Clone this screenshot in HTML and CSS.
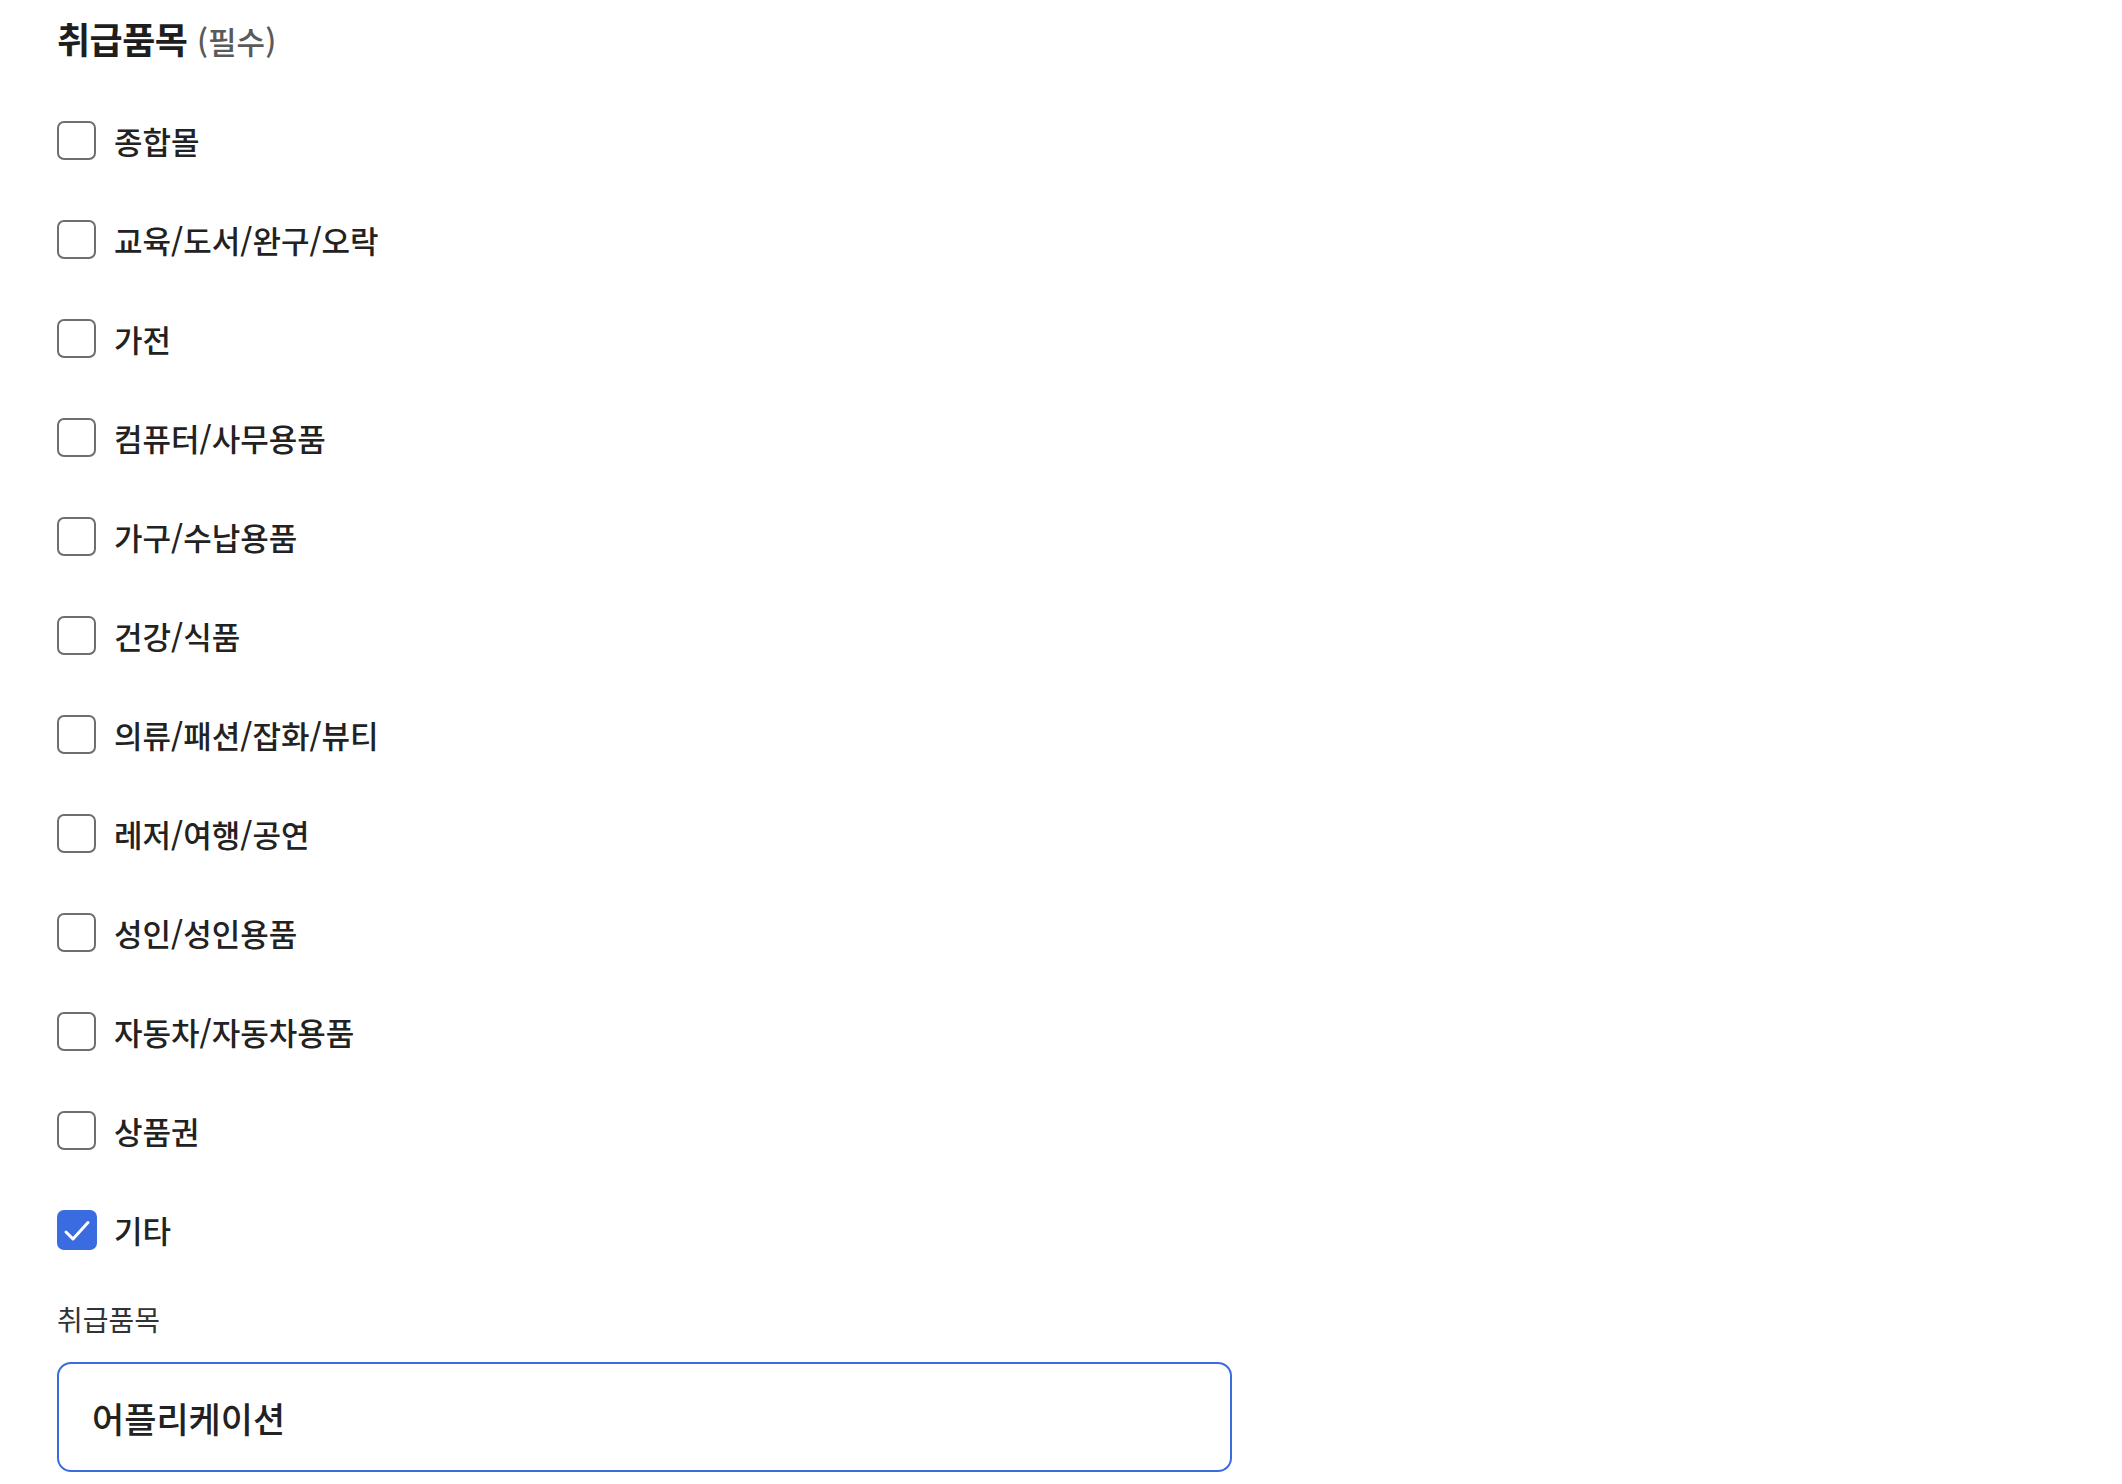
FILE: index.html
```html
<!DOCTYPE html>
<html lang="ko">
<head>
<meta charset="utf-8">
<link rel="stylesheet" href="styles.css">
</head>
<body>
<div class="page">
  <h2 class="title">취급품목 <span class="req">(필수)</span></h2>
  <ul class="list">
    <li class="row"><span class="box"></span><span class="lbl">종합몰</span></li>
    <li class="row"><span class="box"></span><span class="lbl">교육/도서/완구/오락</span></li>
    <li class="row"><span class="box"></span><span class="lbl">가전</span></li>
    <li class="row"><span class="box"></span><span class="lbl">컴퓨터/사무용품</span></li>
    <li class="row"><span class="box"></span><span class="lbl">가구/수납용품</span></li>
    <li class="row"><span class="box"></span><span class="lbl">건강/식품</span></li>
    <li class="row"><span class="box"></span><span class="lbl">의류/패션/잡화/뷰티</span></li>
    <li class="row"><span class="box"></span><span class="lbl">레저/여행/공연</span></li>
    <li class="row"><span class="box"></span><span class="lbl">성인/성인용품</span></li>
    <li class="row"><span class="box"></span><span class="lbl">자동차/자동차용품</span></li>
    <li class="row"><span class="box"></span><span class="lbl">상품권</span></li>
    <li class="row"><span class="box checked"><svg viewBox="0 0 40 40" width="40" height="40"><path d="M9 22 L16 29 L31 12.5" fill="none" stroke="#fff" stroke-width="3" stroke-linecap="round" stroke-linejoin="round"/></svg></span><span class="lbl">기타</span></li>
  </ul>
  <div class="field-label">취급품목</div>
  <div class="input">어플리케이션</div>
</div>
</body>
</html>
```

FILE: styles.css
```css
html, body {
  margin: 0;
  padding: 0;
  background: #fff;
}
body {
  font-family: "Noto Sans CJK KR", "Noto Sans", sans-serif;
  color: #222;
}
.page {
  padding: 14px 0 0 57px;
}
.title {
  margin: 0;
  font-size: 36px;
  font-weight: 700;
  line-height: 48px;
  color: #1e1e1e;
  letter-spacing: -0.5px;
}
.req {
  font-size: 31px;
  font-weight: 500;
  color: #5a5a5a;
  letter-spacing: 0;
}
.list {
  list-style: none;
  margin: 26px 0 0;
  padding: 0;
}
.row {
  display: flex;
  align-items: center;
  gap: 18px;
  height: 99px;
}
.box {
  box-sizing: border-box;
  width: 39px;
  height: 39px;
  border: 2px solid #6e6e6e;
  border-radius: 7px;
  flex: none;
  display: flex;
}
.box.checked {
  width: 40px;
  height: 40px;
  border: none;
  background: #3a6be0;
  margin-right: -1px;
}
.box svg {
  display: block;
}
.lbl {
  font-size: 31px;
  font-weight: 500;
  line-height: 40px;
  color: #222;
}
.field-label {
  margin-top: 22px;
  font-size: 28px;
  line-height: 36px;
  color: #333;
}
.input {
  box-sizing: border-box;
  margin-top: 25px;
  width: 1175px;
  height: 110px;
  border: 2px solid #3a6be0;
  border-radius: 14px;
  padding: 0 33px;
  display: flex;
  align-items: center;
  font-size: 35px;
  font-weight: 500;
  color: #222;
}
```
